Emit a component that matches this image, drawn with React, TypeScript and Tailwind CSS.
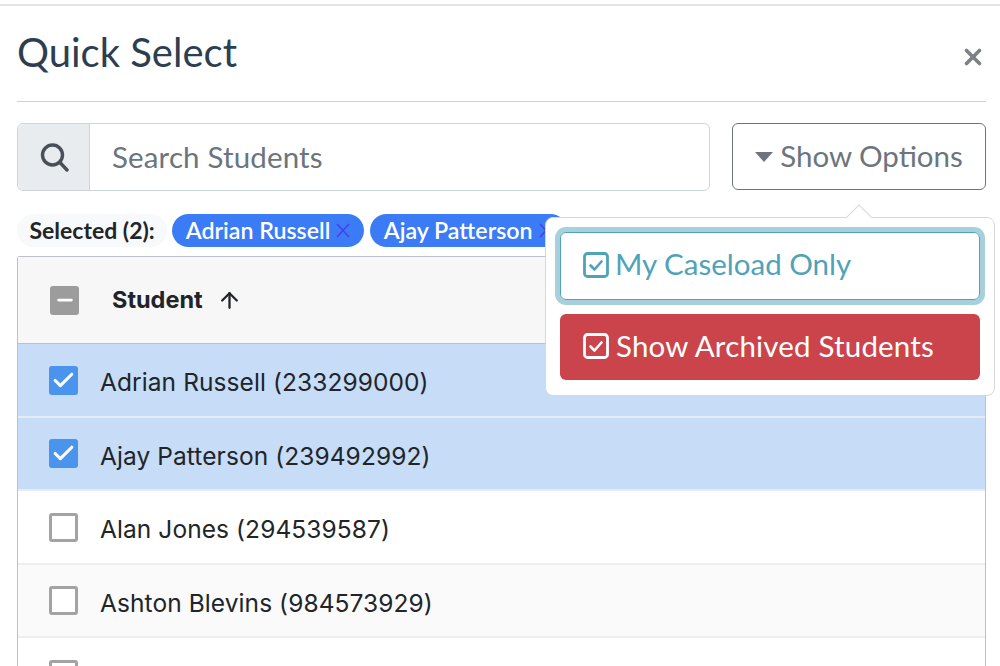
import { Check, Minus, ArrowUp, X } from 'lucide-react';

const students = [
  { name: 'Adrian Russell (233299000)', selected: true, bg: 'bg-[#c6dcf7]' },
  { name: 'Ajay Patterson (239492992)', selected: true, bg: 'bg-[#c6dcf7]' },
  { name: 'Alan Jones (294539587)', selected: false, bg: 'bg-white' },
  { name: 'Ashton Blevins (984573929)', selected: false, bg: 'bg-[#fafafa]' },
  { name: '', selected: false, bg: 'bg-white' },
];

function CheckSquare({ color }: { color: string }) {
  return (
    <svg width="26" height="26" viewBox="0 0 26 26" fill="none" stroke={color} className="mb-[3px] shrink-0">
      <rect x="1.5" y="1.5" width="23" height="23" rx="3" strokeWidth="2.8" />
      <path d="M7.5 13.5l4 4 7-8" strokeWidth="2.6" strokeLinecap="round" strokeLinejoin="round" />
    </svg>
  );
}

function Chip({ label }: { label: string }) {
  return (
    <div className="flex h-[33px] shrink-0 items-center gap-[6px] rounded-full bg-[#3b7cf6] pl-[13.5px] pr-[14px] text-[23.2px] font-semibold text-white">
      <span>{label}</span>
      <svg width="14" height="15" viewBox="0 0 14 15" fill="none" stroke="#4a3fe8" strokeWidth="1.6">
        <path d="M1 1l12 13M13 1L1 14" />
      </svg>
    </div>
  );
}

function Row({ name, selected, bg }: { name: string; selected: boolean; bg: string }) {
  return (
    <div className={`flex h-[73.5px] shrink-0 items-center border-b-2 pl-[31px] pt-[1px] ${bg} ${selected ? 'border-[#e3edf9]' : 'border-[#eeeef0]'}`}>
      {selected ? (
        <div className="flex h-[29px] w-[29px] items-center justify-center rounded-[3px] bg-[#4a94ee]">
          <Check size={25} strokeWidth={3} className="text-white" />
        </div>
      ) : (
        <div className="h-[29px] w-[29px] rounded-[3px] border-[3px] border-[#a3a3a3] bg-white" />
      )}
      <span className="ml-[22px] mt-[5px] font-['Inter',sans-serif] text-[24.5px] tracking-[0.08px] text-[#212529]">{name}</span>
    </div>
  );
}

export default function App() {
  return (
    <div className="relative h-[666px] w-[1000px] overflow-hidden bg-white font-['Lato',sans-serif]">
      <div className="mt-[4px] h-[2px] bg-[#e3e4e6]" />

      <div className="ml-[17px] flex h-[96px] w-[969px] items-center justify-between border-b border-[#cfd1d4]">
        <h1 className="mb-[3px] text-[40px] font-normal text-[#2d3e50]">Quick Select</h1>
        <X size={26} strokeWidth={3.4} className="mt-[6px] text-[#7e8185]" />
      </div>

      <div className="ml-[17px] mt-[21px] flex w-[969px] gap-[22px]">
        <div className="flex h-[68px] w-[693px] rounded-[6px] border border-[#ced4da]">
          <div className="flex w-[72px] items-center justify-center rounded-l-[6px] border-r border-[#ced4da] bg-[#e9ecef]">
            <svg width="30" height="30" viewBox="0 0 30 30" fill="none" stroke="#495057" strokeWidth="3.4" strokeLinecap="round">
              <circle cx="13.5" cy="13" r="10" />
              <path d="M21 20.5l7 7.5" />
            </svg>
          </div>
          <div className="flex flex-1 items-center pl-[22px] text-[29.5px] tracking-[0.15px] text-[#6c757d]">Search Students</div>
        </div>
        <div className="flex h-[67px] w-[254px] items-center justify-center rounded-[6px] border border-[#6c757d] text-[29.5px] text-[#6c757d]">
          <span className="mr-[7px] h-0 w-0 border-x-[9px] border-t-[10px] border-x-transparent border-t-[#6c757d]" />
          Show Options
        </div>
      </div>

      <div className="ml-[17px] mt-[23px] flex items-center">
        <div className="mr-[5px] flex h-[33px] shrink-0 items-center rounded-full bg-[#f8f9fa] px-[12.5px] text-[23px] font-bold text-[#212529]">
          Selected (2):
        </div>
        <Chip label="Adrian Russell" />
        <div className="w-[6px] shrink-0" />
        <Chip label="Ajay Patterson" />
      </div>

      <div className="ml-[17px] mt-[9px] flex w-[969px] flex-col rounded-t-[3px] border-x border-t border-[#bdc1c6]">
        <div className="flex h-[87px] items-center border-b border-[#bdc1c6] bg-[#f7f7f7] pl-[32px]">
          <div className="flex h-[29px] w-[29px] items-center justify-center rounded-[3px] bg-[#9c9c9c]">
            <Minus size={22} strokeWidth={3} className="text-white" />
          </div>
          <span className="ml-[33px] font-['Inter',sans-serif] text-[23.5px] font-bold text-[#212529]">Student</span>
          <ArrowUp size={25} strokeWidth={2.2} className="ml-[14px] text-[#212529]" />
        </div>
        {students.map((s) => (
          <Row key={s.name} name={s.name} selected={s.selected} bg={s.bg} />
        ))}
      </div>

      {/* options popover */}
      <div className="absolute left-[545px] top-[217px] flex h-[179px] w-[450px] flex-col gap-[14px] rounded-[8px] border border-[#d6d8da] bg-white px-[14px] pt-[14px]">
        <div className="absolute -top-[10px] left-[304px] h-[18px] w-[18px] rotate-45 border-l border-t border-[#d6d8da] bg-white" />
        <div className="relative flex h-[68px] items-center gap-[6px] rounded-[6px] border border-[#4fa3b8] pl-[22px] text-[29.5px] text-[#4fa3b8] shadow-[0_0_0_5px_#a6d0dc]">
          <CheckSquare color="#4fa3b8" />
          <span className="mb-[3px]">My Caseload Only</span>
        </div>
        <div className="relative flex h-[66px] items-center gap-[7px] rounded-[6px] bg-[#cc444b] pl-[23px] text-[29.5px] tracking-[0.18px] text-white">
          <CheckSquare color="#ffffff" />
          <span className="mb-[1px]">Show Archived Students</span>
        </div>
      </div>
    </div>
  );
}
